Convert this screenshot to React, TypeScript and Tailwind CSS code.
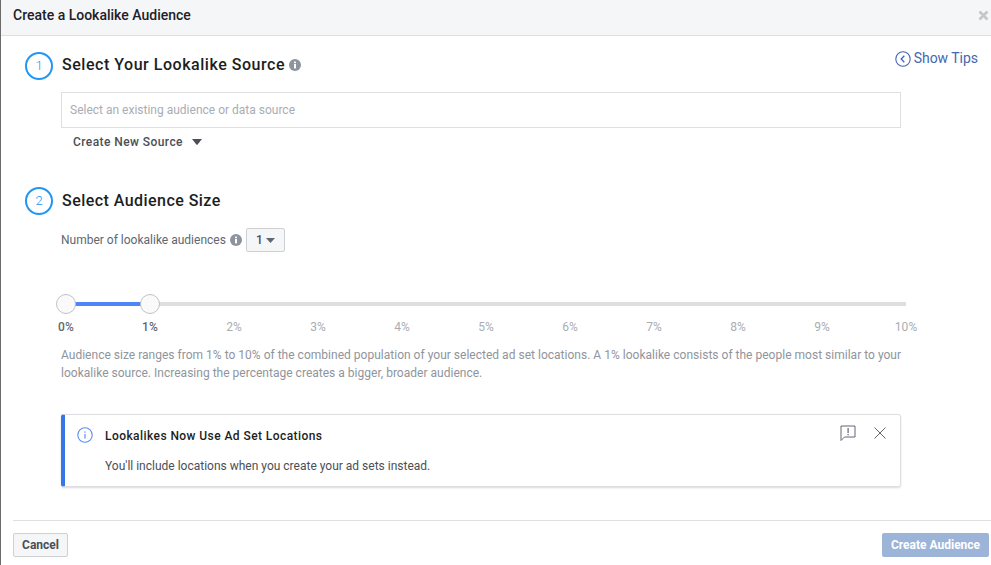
import React from 'react';

const ticks = ['0%', '1%', '2%', '3%', '4%', '5%', '6%', '7%', '8%', '9%', '10%'];

const InfoDot = ({ size = 12 }: { size?: number }) => (
  <svg width={size} height={size} viewBox="0 0 12 12" className="shrink-0">
    <circle cx="6" cy="6" r="6" fill="#8d949e" />
    <rect x="5" y="5" width="2" height="4.4" fill="#fff" />
    <rect x="5" y="2.6" width="2" height="1.6" fill="#fff" />
  </svg>
);

const StepCircle = ({ n }: { n: number }) => (
  <div className="flex h-[28px] w-[28px] shrink-0 items-center justify-center rounded-full border-2 border-[#2196f3] text-[13px] font-light text-[#2196f3]">
    {n}
  </div>
);

const App: React.FC = () => {
  return (
    <div
      className="flex h-[565px] w-[991px] flex-col overflow-hidden border-l border-[#6b6b6b] bg-white text-[#4b4f56]"
      style={{ fontFamily: 'Roboto, Arial, sans-serif' }}
    >
      <div className="flex h-[36px] shrink-0 items-center justify-between border-b border-[#dddfe2] bg-[#f5f6f7] pb-[4px] pl-[12px] pr-[2px]">
        <span className="text-[14px] font-medium text-[#1d2129]">Create a Lookalike Audience</span>
        <svg width="11" height="11" viewBox="0 0 11 11">
          <path d="M1.5 1.5l8 8M9.5 1.5l-8 8" stroke="#c4c6ca" strokeWidth="2.6" />
        </svg>
      </div>

      <div className="flex min-h-0 flex-1 flex-col pl-[24px]">
        <div className="flex items-start pt-[16px]">
          <StepCircle n={1} />
          <div className="ml-[9px] mt-[-1px] flex h-[28px] items-center gap-[4px]">
            <span className="text-[16px] font-medium tracking-[0.53px] text-[#1c1e21]">Select Your Lookalike Source</span>
            <InfoDot />
          </div>
          <div className="ml-auto mr-[13px] mt-[-4px] flex items-center gap-[3px] text-[14px] tracking-[-0.03px] text-[#4267b2]">
            <svg width="16" height="16" viewBox="0 0 16 16">
              <circle cx="8" cy="8" r="7.2" fill="none" stroke="#4267b2" strokeWidth="1.1" />
              <path d="M9.3 4.8L6.2 8l3.1 3.2" fill="none" stroke="#4267b2" strokeWidth="1.3" />
            </svg>
            <span>Show Tips</span>
          </div>
        </div>

        <div className="ml-[36px] mt-[12px] flex h-[36px] w-[840px] items-center border border-[#dddfe2] px-[8px] text-[12px] text-[#a9adb3]">
          Select an existing audience or data source
        </div>
        <div className="ml-[48px] mt-[7px] flex h-[14px] items-center gap-[9px] text-[12px] font-medium tracking-[0.43px] text-[#4b4f56]">
          <span>Create New Source</span>
          <svg width="10" height="6" viewBox="0 0 10 6">
            <path d="M0 0h10L5.6 5.6a.8.8 0 0 1-1.2 0z" fill="#4b4f56" />
          </svg>
        </div>

        <div className="mt-[38px] flex items-center gap-[9px]">
          <StepCircle n={2} />
          <span className="mt-[-1px] text-[16px] font-medium tracking-[0.45px] text-[#1c1e21]">Select Audience Size</span>
        </div>

        <div className="ml-[36px] mt-[13px] flex items-center text-[12px] text-[#606770]">
          <span>Number of lookalike audiences</span>
          <span className="ml-[4px]"><InfoDot /></span>
          <div className="ml-[4px] flex h-[24px] w-[39px] items-center justify-center gap-[3px] rounded-[2px] border border-[#ced0d4] bg-[#f5f6f7] text-[12px] font-medium text-[#4b4f56]">
            <span>1</span>
            <svg width="9" height="5" viewBox="0 0 9 5">
              <path d="M0 0h9L4.5 5z" fill="#606770" />
            </svg>
          </div>
        </div>

        {/* slider */}
        <div className="relative ml-[41px] mt-[42px] h-[20px] w-[840px]">
          <div className="absolute left-0 top-[8px] h-[4px] w-full bg-[#dddfe2]" />
          <div className="absolute left-0 top-[8px] h-[4px] w-[84px] bg-[#4e86f7]" />
          <div className="absolute left-[-10px] top-0 h-[20px] w-[20px] rounded-full border border-[#bec3c9] bg-[#fafafa]" />
          <div className="absolute left-[74px] top-0 h-[20px] w-[20px] rounded-full border border-[#bec3c9] bg-[#fafafa]" />
        </div>
        <div className="ml-[21px] mt-[6px] flex w-[880px] text-[12px] leading-[14px] tracking-[0.1px]">
          {ticks.map((t, i) => (
            <span
              key={t}
              className={i < 2 ? 'mr-[44px] w-[40px] shrink-0 text-center font-medium text-[#606770]' : 'mr-[44px] w-[40px] shrink-0 text-center text-[#a9adb3]'}
            >
              {t}
            </span>
          ))}
        </div>

        <p className="ml-[36px] mt-[12px] w-[860px] text-[12px] leading-[18px] tracking-[0.015px] text-[#90949c]">
          Audience size ranges from 1% to 10% of the combined population of your selected ad set locations. A 1% lookalike consists of the people most similar to your lookalike source. Increasing the percentage creates a bigger, broader audience.
        </p>

        <div className="ml-[36px] mt-[32px] flex h-[73px] w-[840px] rounded-[3px] border border-[#dddfe2] border-l-[4px] border-l-[#3578e5] pl-[12px] pr-[13px] shadow-[0_1px_2px_rgba(0,0,0,0.15)]">
          <svg width="16" height="16" viewBox="0 0 16 16" className="mt-[12px] shrink-0">
            <circle cx="8" cy="8" r="7.2" fill="none" stroke="#5b8def" strokeWidth="1.1" />
            <rect x="7.4" y="7" width="1.2" height="4.6" fill="#5b8def" />
            <rect x="7.4" y="4.4" width="1.2" height="1.4" fill="#5b8def" />
          </svg>
          <div className="ml-[12px] flex-1 pt-[14px]">
            <div className="text-[12px] font-medium leading-[14px] tracking-[0.43px] text-[#1c1e21]">Lookalikes Now Use Ad Set Locations</div>
            <div className="mt-[16px] text-[12px] leading-[14px] text-[#4b4f56]">You'll include locations when you create your ad sets instead.</div>
          </div>
          <div className="flex items-start gap-[17px] pt-[10px]">
            <svg width="16" height="16" viewBox="0 0 16 16">
              <path d="M1 1h14v11H4.5L1 15.5z" fill="none" stroke="#606770" strokeWidth="1" />
              <rect x="7.5" y="3" width="1.2" height="5" fill="#606770" />
              <rect x="7.5" y="9" width="1.2" height="1.3" fill="#606770" />
            </svg>
            <svg width="14" height="14" viewBox="0 0 14 14" className="mt-[1px]">
              <path d="M1.5 1.5l11 11M12.5 1.5l-11 11" stroke="#606770" strokeWidth="1" />
            </svg>
          </div>
        </div>
      </div>

      <div className="ml-[12px] flex h-[45px] shrink-0 items-center justify-between border-t border-[#dddfe2] pt-[3px] pr-[2px]">
        <button className="h-[24px] w-[55px] rounded-[2px] border border-[#ced0d4] bg-[#f5f6f7] text-[12px] font-bold text-[#4b4f56]">Cancel</button>
        <button className="h-[24px] w-[107px] rounded-[2px] bg-[#9cb4d8] text-[12px] font-bold text-white">Create Audience</button>
      </div>
    </div>
  );
};

export default App;
